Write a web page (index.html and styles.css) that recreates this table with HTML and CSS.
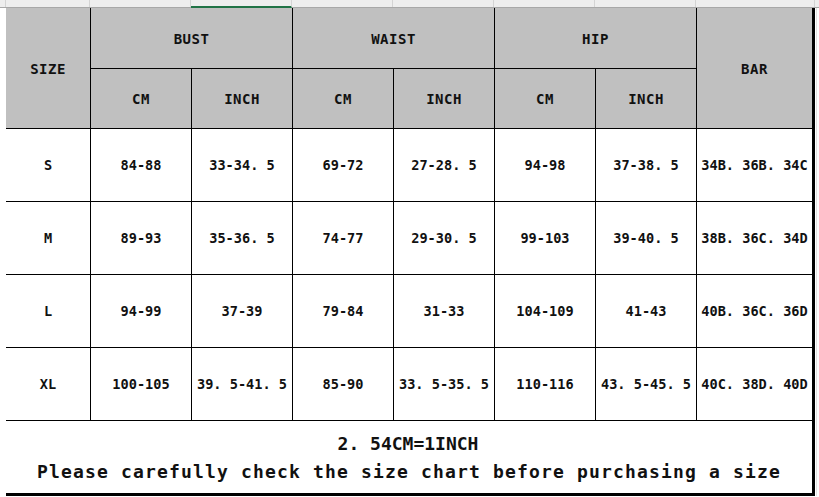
FILE: index.html
```html
<!DOCTYPE html>
<html>
<head>
<meta charset="utf-8">
<link rel="stylesheet" href="styles.css">
</head>
<body>
<div class="sheet">
  <div class="strip">
    <div class="sc"></div>
    <div class="sc"></div>
    <div class="sc"></div>
    <div class="sc sel"></div>
    <div class="sc"></div>
    <div class="sc"></div>
    <div class="sc"></div>
    <div class="sc"></div>
    <div class="sc"></div>
    <div class="sc last"></div>
  </div>
  <div class="row-wrap">
    <div class="gutter"></div>
    <div class="chart">
      <div class="c h size">SIZE</div>
      <div class="c h span2">BUST</div>
      <div class="c h span2">WAIST</div>
      <div class="c h span2">HIP</div>
      <div class="c h bar">BAR</div>
      <div class="c h">CM</div>
      <div class="c h">INCH</div>
      <div class="c h">CM</div>
      <div class="c h">INCH</div>
      <div class="c h">CM</div>
      <div class="c h">INCH</div>

      <div class="c">S</div>
      <div class="c">84-88</div>
      <div class="c">33-34. 5</div>
      <div class="c">69-72</div>
      <div class="c">27-28. 5</div>
      <div class="c">94-98</div>
      <div class="c">37-38. 5</div>
      <div class="c">34B. 36B. 34C</div>

      <div class="c">M</div>
      <div class="c">89-93</div>
      <div class="c">35-36. 5</div>
      <div class="c">74-77</div>
      <div class="c">29-30. 5</div>
      <div class="c">99-103</div>
      <div class="c">39-40. 5</div>
      <div class="c">38B. 36C. 34D</div>

      <div class="c">L</div>
      <div class="c">94-99</div>
      <div class="c">37-39</div>
      <div class="c">79-84</div>
      <div class="c">31-33</div>
      <div class="c">104-109</div>
      <div class="c">41-43</div>
      <div class="c">40B. 36C. 36D</div>

      <div class="c">XL</div>
      <div class="c">100-105</div>
      <div class="c">39. 5-41. 5</div>
      <div class="c">85-90</div>
      <div class="c">33. 5-35. 5</div>
      <div class="c">110-116</div>
      <div class="c">43. 5-45. 5</div>
      <div class="c">40C. 38D. 40D</div>

      <div class="c foot">
        <div class="f1">2. 54CM=1INCH</div>
        <div class="f2">Please carefully check the size chart before purchasing a size</div>
      </div>
    </div>
    <div class="rgutter"></div>
  </div>
</div>
</body>
</html>
```

FILE: styles.css
```css
html, body {
  margin: 0;
  padding: 0;
  background: #ffffff;
}

.sheet {
  width: 819px;
  height: 497px;
  overflow: hidden;
  font-family: "DejaVu Sans Mono", "Liberation Mono", monospace;
  font-weight: bold;
  color: #111111;
}

.strip {
  display: grid;
  grid-template-columns: 6px 84px 101px 101px 101px 101px 101px 101px 119px 1fr;
  height: 8px;
  background: #eeeeee;
  box-sizing: border-box;
  border-bottom: 1px solid #a8a8a8;
}

.sc {
  box-sizing: border-box;
  border-right: 1px solid #d4d4d4;
}

.sc.sel {
  border-bottom: 2px solid #217346;
  margin-bottom: -1px;
}

.sc.last {
  border-right: none;
}

.row-wrap {
  display: flex;
}

.gutter {
  width: 6px;
  flex: none;
}

.rgutter {
  flex: 1;
  border-left: 1px solid #e2e2e2;
  margin-left: 1px;
}

.chart {
  display: grid;
  grid-template-columns: 84px repeat(6, 100px) 115px;
  grid-template-rows: 60px 59px repeat(4, 72px) 72px;
  gap: 1px;
  background: #000000;
  border-right: 3px solid #000000;
  border-bottom: 3px solid #000000;
  flex: none;
}

.c {
  background: #ffffff;
  display: flex;
  align-items: center;
  justify-content: center;
  font-size: 13.6px;
  white-space: nowrap;
}

.h {
  background: #c0c0c0;
  font-size: 14px;
  letter-spacing: 0.5px;
}

.size {
  grid-row: 1 / span 2;
  padding-top: 2px;
}

.bar {
  grid-column: 8;
  grid-row: 1 / span 2;
  padding-top: 2px;
}

.span2 {
  grid-column: span 2;
  padding-top: 2px;
}

.foot {
  grid-column: 1 / -1;
  flex-direction: column;
  font-size: 18px;
  padding-top: 1px;
}

.f1 {
  line-height: 28px;
  padding-right: 2px;
}

.f2 {
  line-height: 28px;
  letter-spacing: 1.16px;
}
```
